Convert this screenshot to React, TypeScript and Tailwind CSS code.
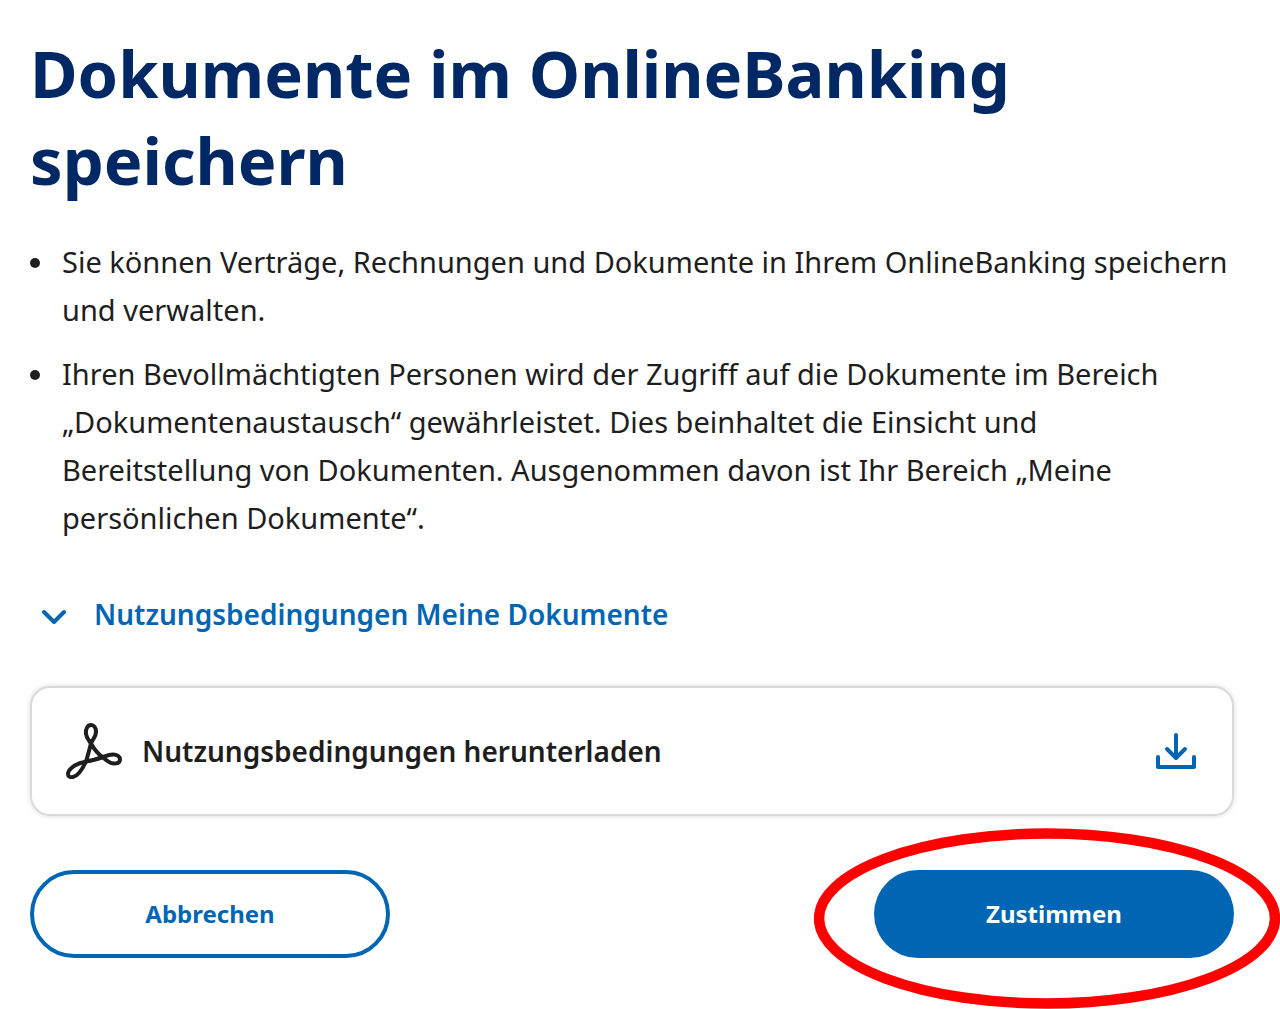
import type { ReactNode } from "react";

const AcrobatIcon = () => (
	<svg viewBox="0 0 56 56" className="size-14 shrink-0" fill="none" stroke="currentColor" strokeWidth="4" strokeLinejoin="round" aria-hidden="true">
		<path d="M25 2C21 2 19.500 7 20 11C20.500 15 22.500 17 25 20.500C28 26 32 31 37 34.500C41 38 44 40.500 48 40.500C52 40.500 54 39 54 36.500C54 33.500 51 31.500 47 31.500C43 31.500 40 33 36 34.500C31 36 26 37.500 20.500 38.500C15 39.500 10 41 6 44.500C3 47 2 49 2 51C2 53.500 4 54.500 7 54C13 53 17 45 20 38.500C22 32 23.500 26 25 20.500C27 16 30 13 30 9C30 5 28 2 25 2Z" />
	</svg>
);

const ChevronIcon = () => (
	<svg viewBox="0 0 24 24" className="size-6 shrink-0" fill="none" stroke="currentColor" strokeWidth="4" strokeLinecap="round" strokeLinejoin="round" aria-hidden="true">
		<path d="M2 10L12 20L22 10" />
	</svg>
);

const DownloadIcon = () => (
	<svg viewBox="0 0 42 38" className="h-[38px] w-[42px] shrink-0 text-[#0066b3]" fill="none" stroke="currentColor" strokeWidth="4" strokeLinecap="round" strokeLinejoin="round" aria-hidden="true">
		<path d="M20 3V26M11 17L20 26L29 17" />
		<path d="M2 25V35H38V25" />
	</svg>
);

const Highlight = ({ children }: { children: ReactNode }) => (
	<div className="relative">
		{children}
		<svg viewBox="0 0 466 181" className="pointer-events-none absolute -top-[42px] -left-[60px] h-[181px] w-[466px] max-w-none" fill="none" aria-hidden="true">
			<ellipse cx="233" cy="90.500" rx="228" ry="85" stroke="#ff0000" strokeWidth="10.500" />
		</svg>
	</div>
);

const ListItem = ({ children }: { children: ReactNode }) => (
	<li className="flex gap-[22px] before:mt-5 before:size-2.5 before:shrink-0 before:rounded-full before:bg-current before:content-['']">
		<span>{children}</span>
	</li>
);

const App = () => {
	return (
		<main className="overflow-hidden bg-white pt-[30px] pr-[46px] pb-[51px] pl-[30px] font-['Noto_Sans',sans-serif] text-[#1e1e1e]">
			<h1 className="max-w-[1100px] text-[65px] leading-[87px] font-bold text-[#002864]">
				Dokumente im OnlineBanking speichern
			</h1>

			<ul className="mt-[34px] space-y-4 text-[29px] leading-[48px]">
				<ListItem>
					Sie können Verträge, Rechnungen und Dokumente in Ihrem OnlineBanking speichern und
					verwalten.
				</ListItem>
				<ListItem>
					Ihren Bevollmächtigten Personen wird der Zugriff auf die Dokumente im Bereich
					„Dokumentenaustausch“ gewährleistet. Dies beinhaltet die Einsicht und Bereitstellung von
					Dokumenten. Ausgenommen davon ist Ihr Bereich „Meine persönlichen Dokumente“.
				</ListItem>
			</ul>

			<button
				type="button"
				aria-expanded="false"
				className="mt-12 flex items-center gap-7 pl-3 text-[28px] leading-[48px] font-semibold text-[#0066b3]"
			>
				<ChevronIcon />
				Nutzungsbedingungen Meine Dokumente
			</button>

			<a
				href="#nutzungsbedingungen"
				className="mt-12 flex h-[130px] items-center gap-5 rounded-[20px] border-2 border-[#dadada] px-[34px] text-[28px] font-semibold shadow-[0_0_5px_#00000026]"
			>
				<AcrobatIcon />
				<span className="flex-1">Nutzungsbedingungen herunterladen</span>
				<DownloadIcon />
			</a>

			<div className="mt-[54px] flex justify-between text-[24px] font-bold">
				<button
					type="button"
					className="h-[88px] w-[360px] rounded-full border-4 border-[#0066b3] text-[#0066b3]"
				>
					Abbrechen
				</button>
				<Highlight>
					<button type="button" className="h-[88px] w-[360px] rounded-full bg-[#0066b3] text-white">
						Zustimmen
					</button>
				</Highlight>
			</div>
		</main>
	);
};

export default App;
